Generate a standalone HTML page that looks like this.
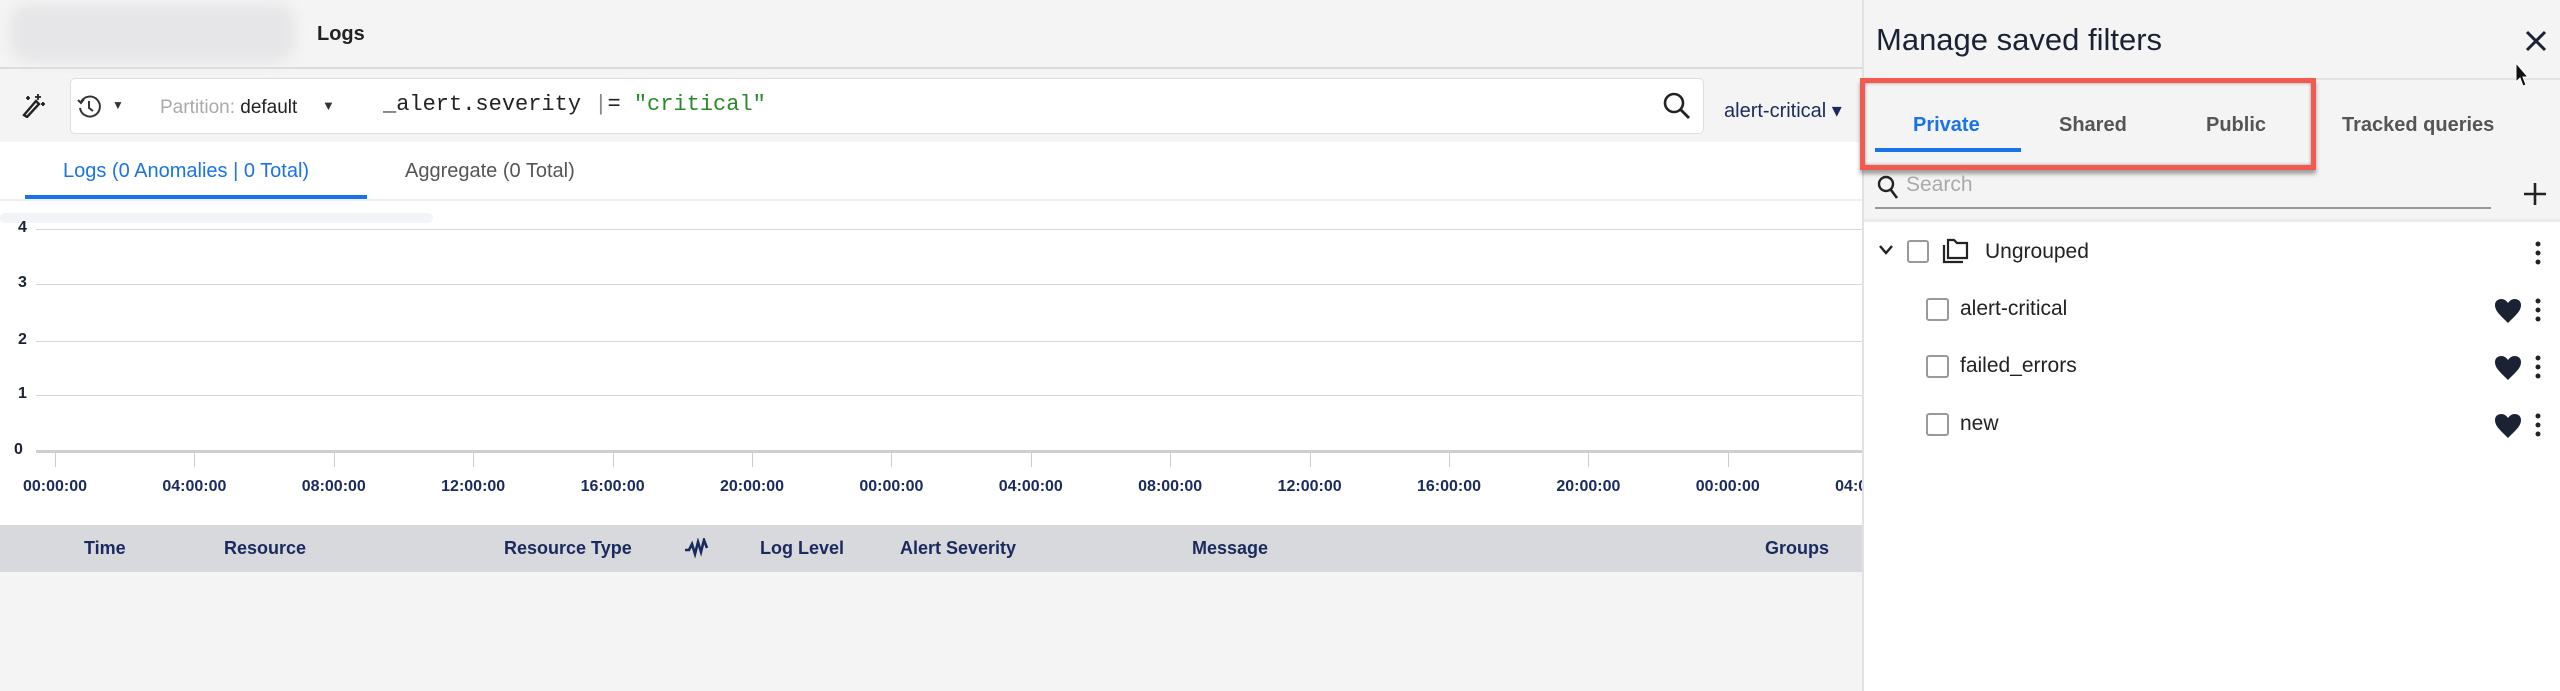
<!DOCTYPE html>
<html><head><meta charset="utf-8"><style>
*{margin:0;padding:0;box-sizing:border-box}
body{width:2560px;height:691px;overflow:hidden;background:#f4f4f4;font-family:"Liberation Sans",sans-serif;position:relative;color:#1a2233}
.a{position:absolute;white-space:nowrap}
.navy{color:#1b2a5e}
</style></head><body>
<div class="a" style="left:0;top:0;width:1862px;height:69px;background:#f4f4f4;border-bottom:2px solid #dcdcdc"></div>
<div class="a" style="left:10px;top:4px;width:285px;height:58px;background:#e6e6e8;border-radius:20px;filter:blur(6px)"></div>
<div class="a" style="left:317px;top:23px;font-size:20px;font-weight:bold;color:#222">Logs</div>
<svg class="a" style="left:20px;top:92px" width="26" height="26" viewBox="0 0 26 26"><path d="M4 23 L16 9 L19 12 L7 25 Z" fill="none" stroke="#222" stroke-width="2.4"/><path d="M18 2v6M15 5h6M8 4v4M6 6h4M23 10v4M21 12h4" stroke="#222" stroke-width="1.8"/></svg>
<div class="a" style="left:70px;top:78px;width:1634px;height:56px;background:#fff;border:1px solid #dedede;border-radius:5px"></div>
<svg class="a" style="left:76px;top:94px" width="26" height="26" viewBox="0 0 26 26"><path d="M5 8 A10 10 0 1 1 4 14" fill="none" stroke="#333" stroke-width="2"/><path d="M2 6 L5 9 L8 5" fill="none" stroke="#333" stroke-width="2"/><path d="M13 7v7l4 3" fill="none" stroke="#333" stroke-width="2"/></svg>
<div class="a" style="left:112px;top:98px;font-size:12px;color:#333">▼</div>
<div class="a" style="left:160px;top:97px;font-size:19px;color:#aaa">Partition: <span style="color:#222">default</span></div>
<div class="a" style="left:322px;top:98px;font-size:13px;color:#333">▼</div>
<div class="a" style="left:383px;top:92px;font-family:'Liberation Mono',monospace;font-size:22px;color:#222">_alert.severity <span style="color:#888">|</span>= <span style="color:#2a8a2a">"critical"</span></div>
<svg class="a" style="left:1662px;top:91px" width="30" height="30" viewBox="0 0 30 30"><circle cx="12" cy="12" r="9" fill="none" stroke="#222" stroke-width="2.6"/><path d="M19 19 L27 27" stroke="#222" stroke-width="2.8"/></svg>
<div class="a navy" style="left:1724px;top:98px;font-size:20px">alert-critical ▾</div>
<div class="a" style="left:0;top:142px;width:1862px;height:383px;background:#fff"></div>
<div class="a" style="left:63px;top:160px;font-size:20px;color:#1a73e8">Logs (0 Anomalies | 0 Total)</div>
<div class="a" style="left:25px;top:195px;width:342px;height:4px;background:#1a73e8"></div>
<div class="a" style="left:405px;top:160px;font-size:20px;color:#555">Aggregate (0 Total)</div>
<div class="a" style="left:0;top:199px;width:1862px;height:2px;background:#eee"></div>
<div class="a" style="left:0;top:213px;width:433px;height:10px;background:#f3f4f7;border-radius:5px"></div>
<div class="a" style="left:18px;top:219px;font-size:16px;font-weight:bold">4</div>
<div class="a" style="left:18px;top:274px;font-size:16px;font-weight:bold">3</div>
<div class="a" style="left:18px;top:331px;font-size:16px;font-weight:bold">2</div>
<div class="a" style="left:18px;top:385px;font-size:16px;font-weight:bold">1</div>
<div class="a" style="left:14px;top:441px;font-size:16px;font-weight:bold">0</div>
<div class="a" style="left:36px;top:229px;width:1826px;height:1px;background:#d6d6d6"></div>
<div class="a" style="left:36px;top:284px;width:1826px;height:1px;background:#d6d6d6"></div>
<div class="a" style="left:36px;top:341px;width:1826px;height:1px;background:#d6d6d6"></div>
<div class="a" style="left:36px;top:395px;width:1826px;height:1px;background:#d6d6d6"></div>
<div class="a" style="left:36px;top:450px;width:1826px;height:3px;background:#cfcfcf"></div>
<div id="ticks"></div>
<div class="a" style="left:0;top:525px;width:1862px;height:47px;background:#d8d9dc"></div>
<div class="a navy" style="left:84px;top:538px;font-size:18px;font-weight:bold">Time</div>
<div class="a navy" style="left:224px;top:538px;font-size:18px;font-weight:bold">Resource</div>
<div class="a navy" style="left:504px;top:538px;font-size:18px;font-weight:bold">Resource Type</div>
<svg class="a" style="left:684px;top:538px" width="26" height="20" viewBox="0 0 26 20"><path d="M1 12 L5 12 L8 6 L11 16 L14 4 L17 14 L20 2 L23 10" fill="none" stroke="#1b2a5e" stroke-width="2.6"/></svg>
<div class="a navy" style="left:760px;top:538px;font-size:18px;font-weight:bold">Log Level</div>
<div class="a navy" style="left:900px;top:538px;font-size:18px;font-weight:bold">Alert Severity</div>
<div class="a navy" style="left:1192px;top:538px;font-size:18px;font-weight:bold">Message</div>
<div class="a navy" style="left:1765px;top:538px;font-size:18px;font-weight:bold">Groups</div>
<div class="a" style="left:1862px;top:0;width:698px;height:691px;background:#fff;border-left:2px solid #e2e2e2"></div>
<div class="a" style="left:1864px;top:0;width:696px;height:220px;background:#f4f4f4"></div>
<div class="a" style="left:1864px;top:78px;width:696px;height:2px;background:#e2e2e2"></div>
<div class="a" style="left:1876px;top:22px;font-size:31px;color:#1a2233">Manage saved filters</div>
<svg class="a" style="left:2524px;top:29px" width="24" height="24" viewBox="0 0 24 24"><path d="M3 3L21 21M21 3L3 21" stroke="#1a2233" stroke-width="3"/></svg>
<svg class="a" style="left:2514px;top:62px" width="16" height="26" viewBox="0 0 16 26"><path d="M2 1 L2 20 L6 16 L9 24 L12 23 L9 15 L14 15 Z" fill="#111" stroke="#fff" stroke-width="1"/></svg>
<div class="a" style="left:1913px;top:114px;font-size:20px;font-weight:bold;color:#1a73e8">Private</div>
<div class="a" style="left:2059px;top:114px;font-size:20px;font-weight:bold;color:#555">Shared</div>
<div class="a" style="left:2206px;top:114px;font-size:20px;font-weight:bold;color:#555">Public</div>
<div class="a" style="left:2342px;top:114px;font-size:20px;font-weight:bold;color:#555">Tracked queries</div>
<div class="a" style="left:1875px;top:148px;width:146px;height:4px;background:#1a73e8"></div>
<div class="a" style="left:1860px;top:78px;width:456px;height:92px;border:5px solid #f25a4f;box-shadow:0 4px 4px rgba(0,0,0,.35), inset 0 0 3px rgba(0,0,0,.4)"></div>
<svg class="a" style="left:1877px;top:174px" width="22" height="26" viewBox="0 0 22 26"><circle cx="9" cy="10" r="7" fill="none" stroke="#222" stroke-width="2.4"/><path d="M14 16 L20 24" stroke="#222" stroke-width="2.6"/></svg>
<div class="a" style="left:1906px;top:173px;font-size:21px;color:#aaa">Search</div>
<div class="a" style="left:1875px;top:207px;width:616px;height:2px;background:#999"></div>
<svg class="a" style="left:2523px;top:182px" width="24" height="24" viewBox="0 0 24 24"><path d="M12 1v22M1 12h22" stroke="#222" stroke-width="2.6"/></svg>
<div class="a" style="left:1864px;top:219px;width:696px;height:3px;background:#eaeaea"></div>
<svg class="a" style="left:1878px;top:244px" width="16" height="12" viewBox="0 0 16 12"><path d="M2 2L8 9L14 2" fill="none" stroke="#222" stroke-width="2.4"/></svg>
<div class="a" style="left:1907px;top:240px;width:22px;height:23px;border:2px solid #999;border-radius:3px"></div>
<svg class="a" style="left:1940px;top:238px" width="30" height="28" viewBox="0 0 30 28"><path d="M8 2 H14 L17 5 H27 V20 H8 Z" fill="none" stroke="#222" stroke-width="2.2"/><path d="M4 7 V24 H23" fill="none" stroke="#222" stroke-width="2.2"/></svg>
<div class="a" style="left:1985px;top:240px;font-size:21px;color:#222">Ungrouped</div>
<svg class="a" style="left:2533px;top:240px" width="10" height="26" viewBox="0 0 10 26"><circle cx="5" cy="4" r="2.5" fill="#222"/><circle cx="5" cy="13" r="2.5" fill="#222"/><circle cx="5" cy="22" r="2.5" fill="#222"/></svg>
<div id="rows"></div>
<script>
var t='',labels=['00:00:00','04:00:00','08:00:00','12:00:00','16:00:00','20:00:00'];
for(var i=0;i<14;i++){var x=55+i*139.4;
t+='<div class="a" style="left:'+x+'px;top:452px;width:1px;height:15px;background:#ccc"></div>';
t+='<div class="a navy" style="left:'+(x-37)+'px;top:478px;font-size:16px;font-weight:bold;width:74px;text-align:center">'+labels[i%6]+'</div>';}
t+='<div class="a" style="left:1862px;top:440px;width:4px;height:60px;background:#fff"></div>';
document.getElementById('ticks').innerHTML=t;
var r='',names=['alert-critical','failed_errors','new'],ys=[310,367,425];
for(var j=0;j<3;j++){var y=ys[j];
r+='<div class="a" style="left:1926px;top:'+(y-12)+'px;width:23px;height:23px;border:2px solid #999;border-radius:3px;background:#fff"></div>';
r+='<div class="a" style="left:1960px;top:'+(y-13)+'px;font-size:21px;color:#222">'+names[j]+'</div>';
r+='<svg class="a" style="left:2494px;top:'+(y-12)+'px" width="28" height="26" viewBox="0 0 28 26"><path d="M14 25 C6 17 1 13 1 7 C1 3 4 1 7.5 1 C10.5 1 12.5 3 14 5 C15.5 3 17.5 1 20.5 1 C24 1 27 3 27 7 C27 13 22 17 14 25Z" fill="#1a2233"/></svg>';
r+='<svg class="a" style="left:2533px;top:'+(y-13)+'px" width="10" height="26" viewBox="0 0 10 26"><circle cx="5" cy="4" r="2.5" fill="#222"/><circle cx="5" cy="13" r="2.5" fill="#222"/><circle cx="5" cy="22" r="2.5" fill="#222"/></svg>';}
document.getElementById('rows').innerHTML=r;
</script>
</body></html>
